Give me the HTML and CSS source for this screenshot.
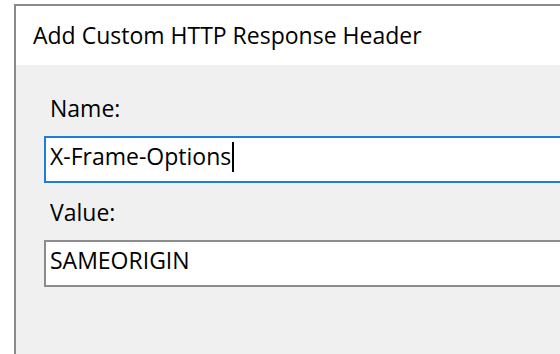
FILE: index.html
```html
<!DOCTYPE html>
<html lang="en">
<head>
    <meta charset="UTF-8">
    <title>Add Custom HTTP Response Header</title>
    <link rel="stylesheet" href="styles.css">
</head>
<body>
    <div class="dialog">
        <div class="title-bar">Add Custom HTTP Response Header</div>

        <div class="content">
            <div class="field">
                <label for="headerName">Name:</label>
                <div class="text-box focused" id="headerName">X-Frame-Options<span class="caret"></span></div>
            </div>

            <div class="field">
                <label for="headerValue">Value:</label>
                <div class="text-box" id="headerValue">SAMEORIGIN</div>
            </div>
        </div>
    </div>
</body>
</html>
```

FILE: styles.css
```css
* {
    margin: 0;
    padding: 0;
    box-sizing: border-box;
}

html, body {
    height: 100%;
    overflow: hidden;
}

body {
    font-family: "Open Sans", "Noto Sans", sans-serif;
    background-color: #fff;
    color: #000;
    padding: 4px 0 0 14px;
}

.dialog {
    width: 546px;
    height: 350px;
    border-top: 2px solid #8a8a8a;
    border-left: 2px solid #8a8a8a;
    background-color: #f0f0f0;
    overflow: hidden;
}

.title-bar {
    height: 59px;
    background-color: #fff;
    font-size: 23px;
    line-height: 59px;
    padding-left: 17px;
}

.content {
    display: flex;
    flex-direction: column;
    gap: 14px;
    padding: 28px 0 0 28px;
}

.field label {
    display: block;
    font-size: 23px;
    line-height: 30px;
    padding-left: 6px;
    margin-bottom: 13px;
}

.text-box {
    width: 560px;
    height: 47px;
    background-color: #fff;
    border: 2px solid #8c8c8c;
    font-size: 23px;
    line-height: 36px;
    padding-left: 4px;
    white-space: nowrap;
}

.text-box.focused {
    border-color: #1e7fd8;
}

.caret {
    display: inline-block;
    width: 2px;
    height: 30px;
    background-color: #000;
    vertical-align: -7px;
    margin-left: 1px;
}
```
